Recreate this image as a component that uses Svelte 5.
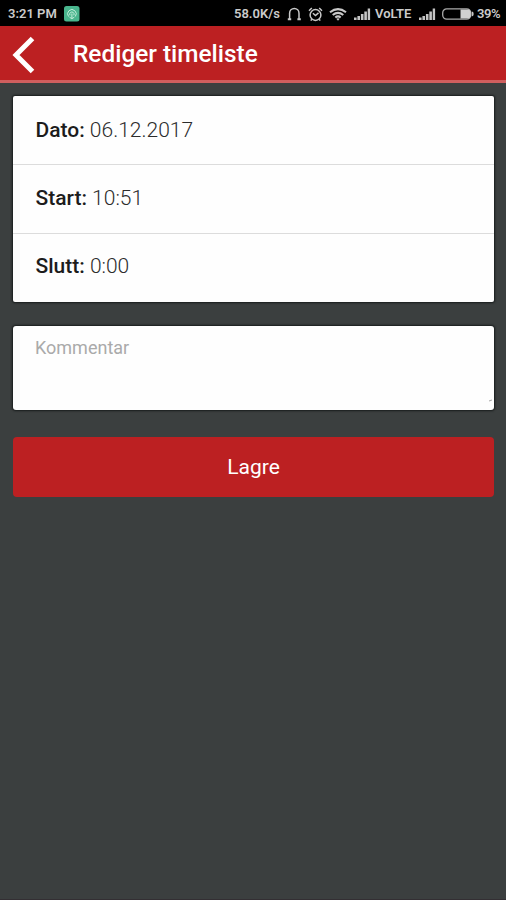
<script>
  const rows = [
    { label: 'Dato', value: '06.12.2017' },
    { label: 'Start', value: '10:51' },
    { label: 'Slutt', value: '0:00' }
  ]
  let comment = ''
</script>

{#snippet signal()}
  <svg class="signal" width="17" height="12" viewBox="0 0 17 12">
    <path d="M0 12V9.5h2.6V12zM3.4 12V8H6v4zM6.9 12V6h2.6v6zM10.3 12V3.5h2.6V12zM13.7 12V.5h2.4V12z" fill="#c4c4c4" />
  </svg>
{/snippet}

<div class="screen">
  <div class="status">
    <span class="time">3:21 PM</span>
    <svg class="app" width="16" height="16" viewBox="0 0 16 16">
      <rect width="15.5" height="15.5" rx="2.5" fill="#49b58d" />
      <g fill="none" stroke="#c5eedb" stroke-width="1">
        <path d="M4.5 10.5A4.3 4.3 0 1 1 11.3 10.5" />
        <path d="M6 9.3a2.2 2.2 0 1 1 3.8 0M7.9 7.5v5M5.5 11.2l2.4 1.5 2.4-1.5" />
      </g>
    </svg>
    <span class="speed">58.0K/s</span>
    <svg class="phones" width="15" height="14" viewBox="0 0 15 14">
      <path d="M2.6 12V6.2a4.7 4.7 0 0 1 9.4 0V12" fill="none" stroke="#c8c8c8" stroke-width="1.5" />
      <path d="M.8 12.2h3.4M10.4 12.2h3.4" fill="none" stroke="#c8c8c8" stroke-width="2" />
    </svg>
    <svg class="alarm" width="15" height="15" viewBox="0 0 15 15">
      <g fill="none" stroke="#c8c8c8" stroke-width="1.5">
        <circle cx="7.5" cy="8" r="5.4" />
        <path d="M1 3.7 3.8 1M14 3.7 11.2 1M4.9 6.2l2.6 2.4 3-2.7M3.8 12.3l-1 1.3M11.2 12.3l1 1.3" />
      </g>
    </svg>
    <svg class="wifi" width="18" height="13" viewBox="0 0 18 13">
      <g fill="none" stroke="#c8c8c8" stroke-width="2.1">
        <path d="M1 4.3Q9-2.1 17 4.3M3.7 7Q9 2.8 14.3 7M6.3 9.5Q9 7.4 11.7 9.5" />
      </g>
      <path d="M7.3 10.7Q9 9.7 10.7 10.7L9 12.8z" fill="#c8c8c8" />
    </svg>
    {@render signal()}
    <span class="volte">VoLTE</span>
    {@render signal()}
    <svg class="battery" width="32" height="12" viewBox="0 0 32 12">
      <rect x=".7" y=".9" width="28" height="10.2" rx="4" fill="none" stroke="#aaa" stroke-width="1.3" />
      <path d="M18.5 1.4h7.2a3 3 0 0 1 3 3v3.2a3 3 0 0 1-3 3h-7.2z" fill="#d0d0d0" />
      <path d="M29.7 3.6q2 0 2 2.4t-2 2.4z" fill="#c8c8c8" />
    </svg>
    <span class="percent">39%</span>
  </div>

  <header>
    <button class="back" aria-label="Tilbake">
      <svg width="24" height="38" viewBox="0 0 24 38">
        <path d="M20.5 2.5 4 19l16.5 16.5" fill="none" stroke="#fff" stroke-width="5" />
      </svg>
    </button>
    <h1>Rediger timeliste</h1>
  </header>

  <main>
    <ul>
      {#each rows as { label, value } (label)}
        <li><strong>{label}:</strong> {value}</li>
      {/each}
    </ul>
    <div class="comment">
      <textarea placeholder="Kommentar" bind:value={comment}></textarea>
      <i></i>
    </div>
    <button class="save">Lagre</button>
  </main>
</div>

<style>
  :global(body) {
    margin: 0;
    background: #3b3f3f;
  }
  .screen {
    box-sizing: border-box;
    height: 100vh;
    overflow: hidden;
    background: #3b3f3f;
    border-bottom: 1px solid #332f33;
    font-family: Roboto, 'Liberation Sans', sans-serif;
  }
  .status {
    display: flex;
    align-items: center;
    box-sizing: border-box;
    height: 26px;
    padding: 2px 0 0 8px;
    background: #000;
    color: #cbcbcb;
    font-size: 13px;
    font-weight: 600;
    line-height: 24px;
    white-space: nowrap;
  }
  .status svg {
    flex: none;
  }
  .time {
    width: 56px;
  }
  .speed {
    width: 53px;
    margin-left: 154px;
  }
  .alarm {
    margin-left: 6px;
  }
  .wifi {
    margin-left: 6px;
  }
  .signal {
    margin-left: 7px;
  }
  .volte {
    width: 37px;
    margin-left: 4px;
  }
  .battery {
    margin-left: 6px;
  }
  .percent {
    margin-left: 3px;
    letter-spacing: -0.4px;
  }
  header {
    display: flex;
    align-items: center;
    box-sizing: border-box;
    height: 57px;
    background: #bc2022;
    border-bottom: 3px solid #cf5e5e;
  }
  .back {
    display: flex;
    width: 73px;
    padding: 3px 0 0 12px;
    border: 0;
    background: none;
  }
  h1 {
    margin: 2px 0 0;
    color: #fff;
    font-size: 24.4px;
    font-weight: 500;
    line-height: 54px;
  }
  main {
    display: flex;
    flex-direction: column;
    padding: 13px 12px 0 13px;
  }
  ul {
    margin: 0;
    padding: 0;
    list-style: none;
    background: #fefefe;
    border-radius: 2px;
    box-shadow: 0 0 2px 1px #181c1c;
  }
  li {
    box-sizing: border-box;
    height: 69px;
    padding-left: 22.5px;
    color: #2c2c2c;
    font-size: 21px;
    font-weight: 300;
    line-height: 68px;
  }
  li:not(:last-child) {
    border-bottom: 1px solid #dcdcdc;
  }
  li:nth-child(2) {
    line-height: 66px;
  }
  li:last-child {
    height: 68px;
    line-height: 64px;
  }
  strong {
    color: #1c1c1c;
    font-weight: 550;
  }
  .comment {
    position: relative;
    height: 84px;
    margin-top: 24px;
    background: #fefefe;
    border-radius: 3px;
    box-shadow: 0 0 2px 1px #181c1c;
  }
  textarea {
    display: block;
    box-sizing: border-box;
    width: 100%;
    height: 100%;
    padding: 10px 22px;
    border: 0;
    outline: 0;
    resize: none;
    background: none;
    color: #333;
    font: 400 18px/24px Roboto, 'Liberation Sans', sans-serif;
  }
  textarea::placeholder {
    color: #aaa;
  }
  .comment i {
    position: absolute;
    right: 2px;
    bottom: 9px;
    width: 3px;
    height: 1px;
    background: #aaa;
    transform: rotate(-20deg);
  }
  .save {
    height: 60px;
    margin-top: 26.5px;
    padding: 0;
    border: 0;
    border-radius: 4px;
    background: #bc2022;
    color: #fff;
    font: 400 21px/60px Roboto, 'Liberation Sans', sans-serif;
  }
</style>
